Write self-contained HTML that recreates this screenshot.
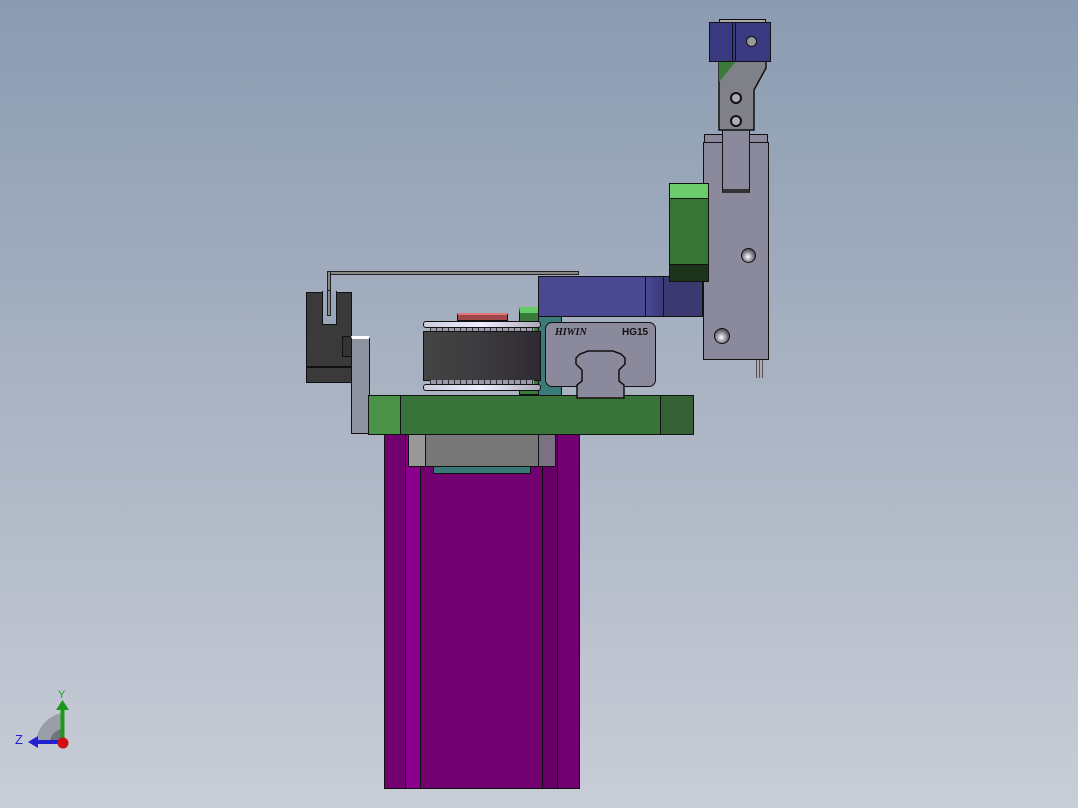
<!DOCTYPE html>
<html><head><style>
body{margin:0;width:1078px;height:808px;overflow:hidden;background:linear-gradient(#8b9bb1,#aab4c3 50%,#c9cdd7);position:relative;font-family:"Liberation Sans",sans-serif}
div{position:absolute;box-sizing:border-box}
.b{border:1.5px solid #111}
</style></head><body>
<!-- wire -->
<div style="left:328px;top:271px;width:251px;height:4px;background:#888;border:1px solid #222;border-radius:3px 0 0 0"></div>
<div style="left:327px;top:271px;width:4px;height:45px;background:#888;border:1px solid #222"></div>
<!-- black U block -->
<div class="b" style="left:306px;top:292px;width:46px;height:91px;background:#3a3a3a"></div>
<div style="left:322px;top:291px;width:15px;height:34px;background:#9aa6b9;border:1.5px solid #111;border-top:none"></div>
<div style="left:327px;top:290px;width:4px;height:26px;background:#888;border:1px solid #222"></div>
<div style="left:306px;top:366px;width:46px;height:1.5px;background:#111"></div>
<div class="b" style="left:342px;top:336px;width:11px;height:21px;background:#333"></div>
<!-- gray plate -->
<div class="b" style="left:351px;top:336px;width:19px;height:98px;background:#8e929e;border-top:3px solid #fff"></div>
<!-- motor -->
<div class="b" style="left:384px;top:432px;width:196px;height:357px;background:#720070"></div>
<div style="left:405px;top:433px;width:16px;height:355px;background:#8a008c;border-left:1.5px solid #111;border-right:1.5px solid #111"></div>
<div style="left:542px;top:433px;width:16px;height:355px;background:#660066;border-left:1.5px solid #111;border-right:1.5px solid #111"></div>
<!-- flange -->
<div class="b" style="left:433px;top:464px;width:98px;height:10px;background:#3a7878"></div>
<div class="b" style="left:408px;top:432px;width:148px;height:35px;background:#777"></div>
<div style="left:409px;top:433px;width:17px;height:33px;background:#999;border-right:1.5px solid #111"></div>
<div style="left:538px;top:433px;width:17px;height:33px;background:#7a7280;border-left:1.5px solid #111"></div>
<!-- green base -->
<div class="b" style="left:368px;top:395px;width:326px;height:40px;background:#38743a"></div>
<div style="left:369px;top:396px;width:32px;height:38px;background:#4a9248;border-right:1.5px solid #111"></div>
<div style="left:660px;top:396px;width:33px;height:38px;background:#366036;border-left:1.5px solid #111"></div>
<!-- teal + small green -->
<div class="b" style="left:519px;top:307px;width:22px;height:88px;background:#3a7a3a;border-top:6px solid #66cc66"></div>
<div class="b" style="left:538px;top:315px;width:24px;height:81px;background:#3a7a78"></div>
<!-- pulley -->
<div class="b" style="left:457px;top:313px;width:51px;height:8px;background:#a04848;border-top:2px solid #d77"></div>
<div class="b" style="left:423px;top:321px;width:118px;height:7px;background:linear-gradient(90deg,#ccd,#eef,#aab);border-radius:3px"></div>
<div style="left:430px;top:328px;width:104px;height:4px;background:repeating-linear-gradient(90deg,#333 0 1px,#99a 1px 6px)"></div>
<div class="b" style="left:423px;top:331px;width:118px;height:50px;background:linear-gradient(90deg,#444,#3c3b3e 50%,#2f2a32)"></div>
<div style="left:430px;top:380px;width:104px;height:4px;background:repeating-linear-gradient(90deg,#333 0 1px,#99a 1px 6px)"></div>
<div class="b" style="left:423px;top:384px;width:118px;height:7px;background:linear-gradient(90deg,#ccd,#eef,#aab);border-radius:3px"></div>
<!-- blue carriage -->
<div class="b" style="left:538px;top:276px;width:130px;height:41px;background:#4a4890"></div>
<div style="left:645px;top:277px;width:20px;height:39px;background:linear-gradient(90deg,#4a4890,#38387a);border-left:1.5px solid #111"></div>
<div class="b" style="left:663px;top:276px;width:40px;height:41px;background:#3a3a70"></div>
<!-- HIWIN block -->
<div class="b" style="left:545px;top:322px;width:111px;height:65px;background:#8a8a9c;border-radius:7px"></div>
<div style="left:555px;top:327px;font:italic bold 10px 'Liberation Serif',serif;color:#111">HIWIN</div>
<div style="left:622px;top:327px;font:bold 10px 'Liberation Sans',sans-serif;color:#111">HG15</div>
<svg style="position:absolute;left:574px;top:350px" width="54" height="50"><path d="M3,48 V35 L8,31 V20 L2,14 V8 L6,4 L14,1 H39 L47,4 L51,8 V14 L45,20 V31 L50,35 V48 Z" fill="#8a8a9c" stroke="#111" stroke-width="1.5"/></svg>
<!-- right tall plate -->
<div class="b" style="left:704px;top:134px;width:20px;height:10px;background:#8a8a9c"></div>
<div class="b" style="left:749px;top:134px;width:19px;height:10px;background:#8a8a9c"></div>
<div class="b" style="left:703px;top:142px;width:66px;height:218px;background:#8a8a9c"></div>
<div class="b" style="left:722px;top:129px;width:28px;height:64px;background:#8a8a9c;border-bottom:4px solid #333"></div>
<div style="left:741px;top:248px;width:15px;height:15px;border-radius:50%;background:radial-gradient(circle at 45% 60%,#fff,#667 60%,#222);border:1px solid #111"></div>
<div style="left:714px;top:328px;width:16px;height:16px;border-radius:50%;background:radial-gradient(circle at 45% 60%,#fff,#667 60%,#222);border:1px solid #111"></div>
<div style="left:756px;top:360px;width:9px;height:18px;background:repeating-linear-gradient(90deg,#555 0 1px,#aab 1px 3px)"></div>
<!-- green block -->
<div class="b" style="left:669px;top:183px;width:40px;height:99px;background:#377637"></div>
<div style="left:670px;top:184px;width:38px;height:15px;background:#6ccc6c;border-bottom:1.5px solid #111"></div>
<div style="left:670px;top:264px;width:38px;height:17px;background:#1c341c;border-top:1.5px solid #111"></div>
<!-- arm -->
<svg style="position:absolute;left:716px;top:58px" width="54" height="74"><path d="M3,2 H50 V10 L38,32 V72 H3 Z" fill="#808088" stroke="#111" stroke-width="1.5"/><path d="M3,2 H21 L3,24 Z" fill="#3a7a3a"/><circle cx="20" cy="40" r="5" fill="#aab" stroke="#111" stroke-width="2"/><circle cx="20" cy="63" r="5" fill="#aab" stroke="#111" stroke-width="2"/></svg>
<!-- clamp -->
<div class="b" style="left:719px;top:19px;width:47px;height:5px;background:#aaa"></div>
<div class="b" style="left:709px;top:22px;width:62px;height:40px;background:#3a3a82"></div>
<div style="left:732px;top:23px;width:4px;height:38px;border-left:1.5px solid #111;border-right:1.5px solid #111"></div>
<div style="left:746px;top:36px;width:11px;height:11px;border-radius:50%;background:#999;border:1.5px solid #111"></div>
<!-- triad -->
<svg style="position:absolute;left:14px;top:688px" width="60" height="64"><path d="M22,55 A32,32 0 0 1 48,25 V55 Z" fill="#9a9ea6"/><path d="M36,55 A14,14 0 0 1 48,41 V55Z" fill="#6f737b"/><rect x="46.5" y="20" width="4" height="32" fill="#1a9a1a"/><path d="M42,22 L48.5,12 L55,22Z" fill="#1a9a1a"/><rect x="22" y="52" width="26" height="4" fill="#2020d0"/><path d="M24,48 L14,54 L24,60Z" fill="#2020d0"/><circle cx="49" cy="55" r="5.5" fill="#d01010"/><text x="44" y="10" font-size="11" fill="#1aa01a" font-family="Liberation Sans">Y</text><text x="1" y="56" font-size="13" fill="#2020d0" font-family="Liberation Sans">Z</text></svg>
</body></html>
